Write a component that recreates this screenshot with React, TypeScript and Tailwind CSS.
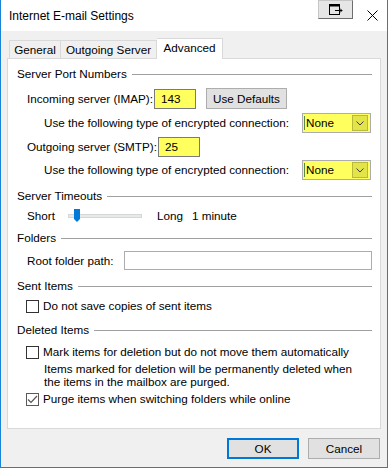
import React from "react";

const font = { fontFamily: '"Liberation Sans", "Segoe UI", Arial, sans-serif' };

function GroupHeader({ title }: { title: string }) {
  return (
    <div className="flex h-[16px] items-center gap-[5px]">
      <span className="whitespace-nowrap">{title}</span>
      <div className="h-px flex-1 bg-[#a0a0a0]" />
    </div>
  );
}

function YellowInput({ value, width }: { value: string; width: string }) {
  return (
    <div className={`flex h-[20px] shrink-0 ${width} items-center border border-[#7a7a7a] bg-[#ffff5e] pl-[6px]`}>
      {value}
    </div>
  );
}

function YellowCombo() {
  return (
    <div className="flex h-[20px] w-[69px] shrink-0 items-center border border-[#adadad] bg-[#ffff5e]">
      <div className="ml-[1px] h-[14px] w-px bg-[#5a8a3a]" />
      <span className="ml-[1px] flex-1">None</span>
      <div className="mr-[2px] flex h-[16px] w-[16px] items-center justify-center border border-[#b9b93a] bg-[#e3e34a]">
        <svg width="8" height="5" viewBox="0 0 8 5">
          <path d="M0.5 0.5 L4 4 L7.5 0.5" fill="none" stroke="#404040" strokeWidth="1" />
        </svg>
      </div>
    </div>
  );
}

function Checkbox({ checked, label }: { checked?: boolean; label: string }) {
  return (
    <div className="flex h-[16px] items-center gap-[4px]">
      <div
        className={`flex h-[13px] w-[13px] shrink-0 items-center justify-center border bg-white ${
          checked ? "border-[#5a5a5a]" : "border-[#333333]"
        }`}
      >
        {checked && (
          <svg width="11" height="9" viewBox="0 0 11 9">
            <path d="M1 4.5 L4 7.5 L10 1" fill="none" stroke="#555555" strokeWidth="1.2" />
          </svg>
        )}
      </div>
      <span className="whitespace-nowrap">{label}</span>
    </div>
  );
}

export default function App() {
  return (
    <div
      className="flex h-[468px] w-[388px] flex-col border-x border-b border-[#1883d7] bg-[#f0f0f0] text-[11.7px] leading-[16px] text-black"
      style={font}
    >
      {/* title bar */}
      <div className="relative flex h-[31px] shrink-0 items-center bg-white pl-[8px] text-[12px]">
        <span>Internet E-mail Settings</span>
        <div className="absolute left-[317px] top-0 flex h-[19px] w-[35px] items-center justify-center border border-[#c6c6c6] border-b-[#6d6d6d] border-r-[#6d6d6d] bg-[#e6e6e6]">
          <svg width="14" height="11" viewBox="0 0 14 11">
            <rect x="0.5" y="0.5" width="10" height="10" fill="none" stroke="#000" />
            <rect x="0.5" y="0.5" width="10" height="2" fill="#000" />
            <path d="M6 6.5 H13 M11 4.5 L13 6.5 L11 8.5" fill="none" stroke="#000" />
          </svg>
        </div>
        <svg className="absolute left-[366px] top-[10px]" width="11" height="11" viewBox="0 0 11 11">
          <path d="M0.5 0.5 L10.5 10.5 M10.5 0.5 L0.5 10.5" stroke="#000" strokeWidth="1" />
        </svg>
      </div>

      {/* tabs */}
      <div className="flex h-[27px] shrink-0 items-end pl-[8px]">
        <div className="flex h-[18px] w-[52px] items-center justify-center border border-b-0 border-[#d9d9d9] bg-[#f0f0f0]">
          General
        </div>
        <div className="flex h-[18px] w-[96px] items-center justify-center border border-b-0 border-l-0 border-[#d9d9d9] bg-[#f0f0f0]">
          Outgoing Server
        </div>
        <div className="relative top-[1px] flex h-[21px] w-[66px] items-start justify-center border border-b-0 border-l-0 border-[#d9d9d9] bg-white pt-[1px]">
          Advanced
        </div>
      </div>

      {/* panel */}
      <div className="mx-[6px] flex h-[371px] shrink-0 flex-col border border-[#d9d9d9] bg-white pl-[9px] pr-[8px] pt-[7px]">
        <GroupHeader title="Server Port Numbers" />
        <div className="mt-[6px] flex h-[21px] items-center pl-[10px]">
          <span className="w-[127px] shrink-0 whitespace-nowrap">Incoming server (IMAP):</span>
          <YellowInput value="143" width="w-[42px]" />
          <button className="ml-[10px] flex h-[21px] w-[81px] shrink-0 items-center justify-center border border-[#adadad] bg-[#e1e1e1]">
            Use Defaults
          </button>
        </div>
        <div className="mt-[4px] flex h-[20px] items-center pl-[27px]">
          <span className="w-[258px] shrink-0 whitespace-nowrap">Use the following type of encrypted connection:</span>
          <YellowCombo />
        </div>
        <div className="mt-[4px] flex h-[20px] items-center pl-[10px]">
          <span className="w-[131px] shrink-0 whitespace-nowrap">Outgoing server (SMTP):</span>
          <YellowInput value="25" width="w-[42px]" />
        </div>
        <div className="mt-[3px] flex h-[20px] items-center pl-[27px]">
          <span className="w-[258px] shrink-0 whitespace-nowrap">Use the following type of encrypted connection:</span>
          <YellowCombo />
        </div>

        <div className="mt-[8px]">
          <GroupHeader title="Server Timeouts" />
        </div>
        <div className="mt-[4px] flex h-[16px] items-center pl-[10px]">
          <span className="w-[41px] shrink-0">Short</span>
          <div className="relative h-[4px] w-[74px] shrink-0 border border-[#d6d6d6] bg-[#e7eaea]">
            <svg className="absolute left-[5px] top-[-6px]" width="6" height="13" viewBox="0 0 6 13">
              <path d="M0 0 H6 V10 L3 13 L0 10 Z" fill="#007ad9" />
            </svg>
          </div>
          <span className="ml-[15px]">Long</span>
          <span className="ml-[9px]">1 minute</span>
        </div>

        <div className="mt-[6px]">
          <GroupHeader title="Folders" />
        </div>
        <div className="mt-[5px] flex h-[19px] items-center pl-[10px]">
          <span className="w-[97px] shrink-0 whitespace-nowrap">Root folder path:</span>
          <div className="h-[19px] flex-1 border border-[#acacac] bg-white" />
        </div>

        <div className="mt-[8px]">
          <GroupHeader title="Sent Items" />
        </div>
        <div className="mt-[4px] pl-[9px]">
          <Checkbox label="Do not save copies of sent items" />
        </div>

        <div className="mt-[8px]">
          <GroupHeader title="Deleted Items" />
        </div>
        <div className="mt-[6px] pl-[9px]">
          <Checkbox label="Mark items for deletion but do not move them automatically" />
        </div>
        <div className="mt-[2px] whitespace-nowrap pl-[27px] leading-[13px]">
          Items marked for deletion will be permanently deleted when
          <br />
          the items in the mailbox are purged.
        </div>
        <div className="mt-[3px] pl-[9px]">
          <Checkbox checked label="Purge items when switching folders while online" />
        </div>
      </div>

      {/* buttons */}
      <div className="mt-[9px] flex justify-end gap-[9px] pr-[7px]">
        <button className="flex h-[21px] w-[72px] items-center justify-center border-2 border-[#0078d7] bg-[#e1e1e1]">
          OK
        </button>
        <button className="flex h-[21px] w-[72px] items-center justify-center border border-[#adadad] bg-[#e1e1e1]">
          Cancel
        </button>
      </div>
    </div>
  );
}
